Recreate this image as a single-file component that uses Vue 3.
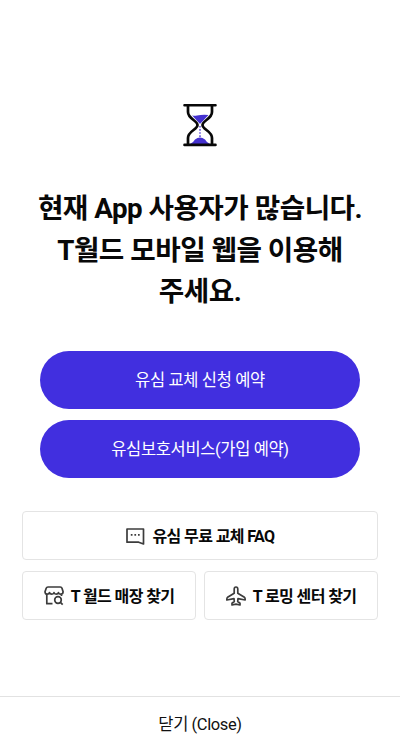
<template>
  <div class="page">
    <main class="content">
      <svg class="hourglass" viewBox="0 0 34 44">
        <path class="sand" d="M9 12.2Q11 13.2 14 12.5Q20 11.2 25.5 12L17.5 20.5H16.5Z" />
        <path class="sand" d="M7 41Q10 40 12 36.5Q17 32.5 22 36.5Q24 40 27 41Z" />
        <path class="drops" d="M17 23V34" />
        <path class="glass" d="M5 3V9C5 16 14.5 17.5 14.5 22S5 28 5 35V41M29 3V9C29 16 19.5 17.5 19.5 22S29 28 29 35V41" />
        <path class="caps" d="M1.5 2.3H32.5M1.5 41.9H32.5" />
      </svg>
      <h1 class="title">
        <span v-for="line in lines" :key="line">{{ line }}</span>
      </h1>
      <div class="actions">
        <button v-for="a in actions" :key="a" class="primary">{{ a }}</button>
      </div>
      <div class="links">
        <button class="link wide">
          <svg class="chat" viewBox="0 0 20 18">
            <path d="M2 2H18.5V17L13.7 15.2H2Z" />
            <path class="dots" d="M5.8 7.8H7.5M9.4 7.8H11.1M13 7.8H14.7" />
          </svg>
          <span>유심 무료 교체 FAQ</span>
        </button>
        <button class="link store">
          <svg class="shop" viewBox="0 0 20 20">
            <path d="M4 1H16.3Q17.6 1 18 2.2L19.1 5.8Q19 8.2 16.8 8.2Q14.7 8.2 14.5 6.5Q14.2 8.2 12.2 8.2Q10.2 8.2 10 6.5Q9.8 8.2 7.8 8.2Q5.8 8.2 5.5 6.5Q5.2 8.2 3.2 8.2Q1 8.2 1 5.8L2.2 2.2Q2.6 1 4 1Z" />
            <path d="M2.8 8.5V17.7H8.5M17.5 8.5V10" />
            <circle cx="14" cy="14" r="3.3" />
            <path d="M16.4 16.4L18.7 18.7" />
          </svg>
          <span>T 월드 매장 찾기</span>
        </button>
        <button class="link roaming">
          <svg class="plane" viewBox="0 0 20 20">
            <path d="M10 1Q11.8 1 11.8 3.2V7.2L18.4 11.3Q19.2 11.8 19.2 14L12 12.7L11.7 15.5L14 17.2V19L10 18.2L6 19V17.2L8.3 15.5L8 12.7L.8 14Q.8 11.8 1.6 11.3L8.2 7.2V3.2Q8.2 1 10 1Z" />
          </svg>
          <span>T 로밍 센터 찾기</span>
        </button>
      </div>
    </main>
    <footer class="close">닫기 (Close)</footer>
  </div>
</template>

<script setup>
const lines = ['현재 App 사용자가 많습니다.', 'T월드 모바일 웹을 이용해', '주세요.']
const actions = ['유심 교체 신청 예약', '유심보호서비스(가입 예약)']
</script>

<style>
body { background: #fff; }
</style>

<style scoped>
.page { height: 741px; display: flex; flex-direction: column; font-family: Roboto, "Noto Sans CJK KR", sans-serif; color: #080808; overflow: hidden; }
.content { flex: 1; padding-top: 103px; display: flex; flex-direction: column; align-items: center; }
button { font: inherit; margin: 0; padding: 0; box-sizing: border-box; white-space: nowrap; }
svg { fill: none; flex: none; display: block; }
.hourglass { width: 34px; height: 44px; }
.sand { fill: #4431cf; }
.drops { stroke: #4431cf; stroke-width: 1.3; stroke-dasharray: 1.6 1.5; }
.glass { stroke: #080808; stroke-width: 2.7; }
.caps { stroke: #080808; stroke-width: 2.6; stroke-linecap: round; }
.title { margin: 41px 0 0; font-size: 27.7px; line-height: 41.5px; font-weight: 700; letter-spacing: -0.5px; text-align: center; }
.title span { display: block; white-space: nowrap; }
.actions { margin-top: 38.5px; width: 320px; display: flex; flex-direction: column; gap: 11px; }
.primary { height: 58px; padding-bottom: 3px; border: 0; border-radius: 29px; background: #412fdf; color: #fff; font-size: 16.5px; letter-spacing: -0.36px; }
.links { margin-top: 33px; width: 356px; display: grid; grid-template-columns: 174px 174px; gap: 11px 8px; }
.link { height: 49px; border: 1px solid #e4e4e4; border-radius: 4px; background: #fff; color: #080808; display: flex; align-items: center; justify-content: center; gap: 7px; font-size: 16px; font-weight: 700; letter-spacing: -0.6px; }
.link span { padding-bottom: 2px; }
.wide { grid-column: 1 / 3; }
.link svg { stroke: #3c3c3c; stroke-width: 1.7; stroke-linejoin: round; }
.chat { width: 20px; height: 18px; }
.shop, .plane { width: 20px; height: 20px; }
.close { height: 45px; box-sizing: border-box; padding-top: 8px; border-top: 1px solid #e2e2e2; display: flex; align-items: center; justify-content: center; font-size: 16.5px; letter-spacing: -0.4px; color: #111; }
</style>
